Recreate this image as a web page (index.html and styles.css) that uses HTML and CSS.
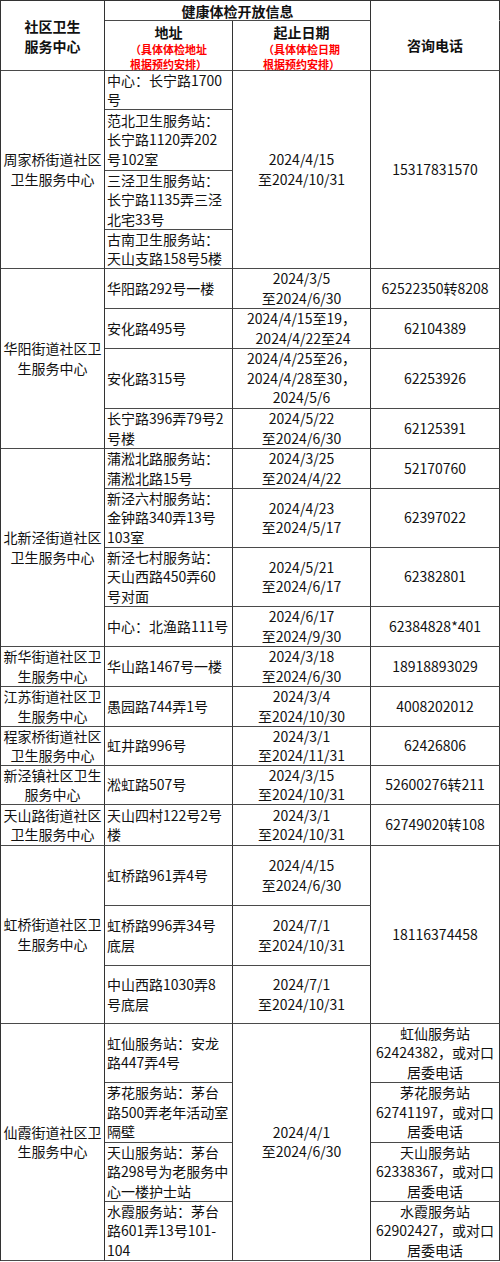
FILE: index.html
```html
<!DOCTYPE html>
<html lang="zh-CN">
<head>
<meta charset="utf-8">
<title>健康体检开放信息</title>
<link rel="stylesheet" href="styles.css">
</head>
<body>
<div class="sheet">
  <div class="c hd rs2">社区卫生<br>服务中心</div>
  <div class="c hd cs2">健康体检开放信息</div>
  <div class="c hd open-top"></div>
  <div class="c hd stack"><span class="ht">地址</span><span class="note">（具体体检地址</span><span class="note">根据预约安排）</span></div>
  <div class="c hd stack"><span class="ht">起止日期</span><span class="note">（具体体检日期</span><span class="note">根据预约安排）</span></div>
  <div class="c hd phone-head">咨询电话</div>

  <div class="c rs4">周家桥街道社区<br>卫生服务中心</div>
  <div class="c addr">中心：长宁路1700<br>号</div>
  <div class="c rs4">2024/4/15<br>至2024/10/31</div>
  <div class="c rs4">15317831570</div>
  <div class="c addr">范北卫生服务站：<br>长宁路1120弄202<br>号102室</div>
  <div class="c addr">三泾卫生服务站：<br>长宁路1135弄三泾<br>北宅33号</div>
  <div class="c addr">古南卫生服务站：<br>天山支路158号5楼</div>

  <div class="c rs4">华阳街道社区卫<br>生服务中心</div>
  <div class="c addr">华阳路292号一楼</div>
  <div class="c">2024/3/5<br>至2024/6/30</div>
  <div class="c">62522350转8208</div>
  <div class="c addr">安化路495号</div>
  <div class="c">2024/4/15至19，<br>&nbsp;2024/4/22至24</div>
  <div class="c">62104389</div>
  <div class="c addr">安化路315号</div>
  <div class="c">2024/4/25至26，<br>2024/4/28至30，<br>2024/5/6</div>
  <div class="c">62253926</div>
  <div class="c addr">长宁路396弄79号2<br>号楼</div>
  <div class="c">2024/5/22<br>至2024/6/30</div>
  <div class="c">62125391</div>

  <div class="c rs4">北新泾街道社区<br>卫生服务中心</div>
  <div class="c addr">蒲淞北路服务站：<br>蒲淞北路15号</div>
  <div class="c">2024/3/25<br>至2024/4/22</div>
  <div class="c">52170760</div>
  <div class="c addr">新泾六村服务站：<br>金钟路340弄13号<br>103室</div>
  <div class="c">2024/4/23<br>至2024/5/17</div>
  <div class="c">62397022</div>
  <div class="c addr">新泾七村服务站：<br>天山西路450弄60<br>号对面</div>
  <div class="c">2024/5/21<br>至2024/6/17</div>
  <div class="c">62382801</div>
  <div class="c addr">中心：北渔路111号</div>
  <div class="c">2024/6/17<br>至2024/9/30</div>
  <div class="c">62384828*401</div>

  <div class="c">新华街道社区卫<br>生服务中心</div>
  <div class="c addr">华山路1467号一楼</div>
  <div class="c">2024/3/18<br>至2024/6/30</div>
  <div class="c">18918893029</div>

  <div class="c">江苏街道社区卫<br>生服务中心</div>
  <div class="c addr">愚园路744弄1号</div>
  <div class="c">2024/3/4<br>至2024/10/30</div>
  <div class="c">4008202012</div>

  <div class="c">程家桥街道社区<br>卫生服务中心</div>
  <div class="c addr">虹井路996号</div>
  <div class="c">2024/3/1<br>至2024/11/31</div>
  <div class="c">62426806</div>

  <div class="c">新泾镇社区卫生<br>服务中心</div>
  <div class="c addr">淞虹路507号</div>
  <div class="c">2024/3/15<br>至2024/10/31</div>
  <div class="c">52600276转211</div>

  <div class="c">天山路街道社区<br>卫生服务中心</div>
  <div class="c addr">天山四村122号2号<br>楼</div>
  <div class="c">2024/3/1<br>至2024/10/31</div>
  <div class="c">62749020转108</div>

  <div class="c rs3">虹桥街道社区卫<br>生服务中心</div>
  <div class="c addr">虹桥路961弄4号</div>
  <div class="c">2024/4/15<br>至2024/6/30</div>
  <div class="c rs3">18116374458</div>
  <div class="c addr">虹桥路996弄34号<br>底层</div>
  <div class="c">2024/7/1<br>至2024/10/31</div>
  <div class="c addr">中山西路1030弄8<br>号底层</div>
  <div class="c">2024/7/1<br>至2024/10/31</div>

  <div class="c rs4">仙霞街道社区卫<br>生服务中心</div>
  <div class="c addr">虹仙服务站：安龙<br>路447弄4号</div>
  <div class="c rs4">2024/4/1<br>至2024/6/30</div>
  <div class="c">虹仙服务站<br>62424382，或对口<br>居委电话</div>
  <div class="c addr">茅花服务站：茅台<br>路500弄老年活动室<br>隔壁</div>
  <div class="c">茅花服务站<br>62741197，或对口<br>居委电话</div>
  <div class="c addr">天山服务站：茅台<br>路298号为老服务中<br>心一楼护士站</div>
  <div class="c">天山服务站<br>62338367，或对口<br>居委电话</div>
  <div class="c addr">水霞服务站：茅台<br>路601弄13号101-<br>104</div>
  <div class="c">水霞服务站<br>62902427，或对口<br>居委电话</div>
</div>
</body>
</html>
```

FILE: styles.css
```css
html, body {
  margin: 0;
  padding: 0;
  background: #ffffff;
}

.sheet {
  display: grid;
  box-sizing: border-box;
  width: 500px;
  grid-template-columns: 104px 128px 138px 129px;
  grid-template-rows:
    20px 50px
    39px 61px 59px 39px
    40px 40px 60px 40px
    40px 59px 59px 40px
    40px 40px 39px 39px 41px
    60px 60px 58px
    59px 60px 59px 59px;
  border-top: 1px solid #333333;
  border-left: 1px solid #333333;
  font-family: "Noto Sans CJK SC", "Microsoft YaHei", "Noto Sans", sans-serif;
  font-size: 14px;
  line-height: 19.5px;
  color: #111111;
}

.c {
  display: flex;
  align-items: center;
  justify-content: center;
  text-align: center;
  white-space: nowrap;
  border-right: 1px solid #333333;
  border-bottom: 1px solid #4a4a4a;
  overflow: hidden;
}

.addr {
  justify-content: flex-start;
  text-align: left;
  padding-left: 2px;
}

.rs2 { grid-row: span 2; }
.rs3 { grid-row: span 3; }
.rs4 { grid-row: span 4; }
.cs2 { grid-column: span 2; }

.hd {
  font-weight: 700;
  line-height: 20px;
}

.open-top {
  border-bottom-color: transparent;
}

.stack {
  flex-direction: column;
  justify-content: flex-start;
  align-items: center;
  padding-top: 1px;
  overflow: visible;
}

.ht {
  display: block;
  line-height: 20px;
}

.note {
  display: block;
  color: #ff0000;
  font-size: 11px;
  line-height: 14.5px;
}

.phone-head {
  padding-bottom: 1px;
}
```
